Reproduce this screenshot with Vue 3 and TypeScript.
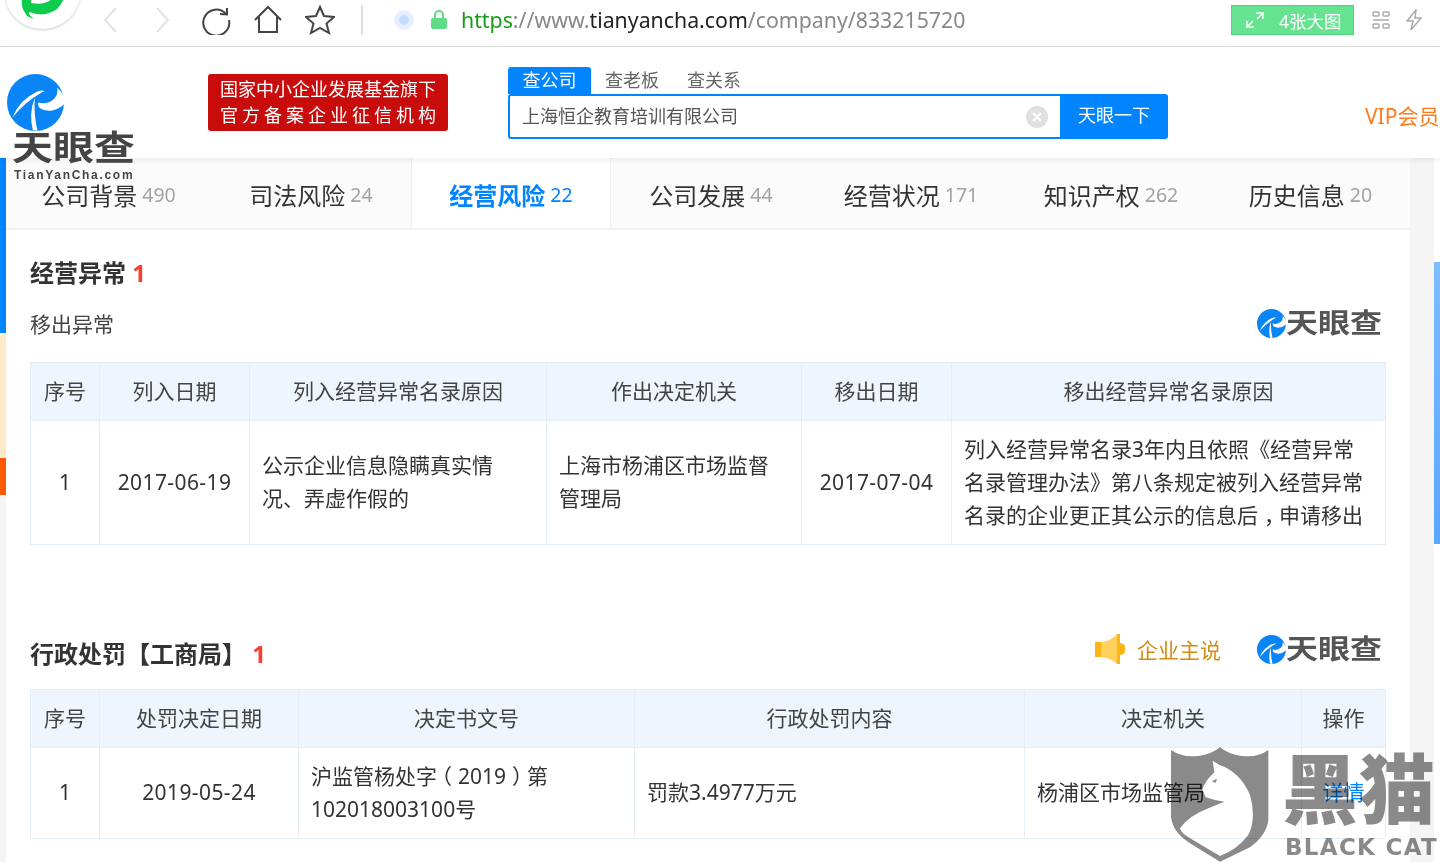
<template>
  <div class="screen">
    <div class="toolbar">
      <div class="browser-logo">
        <svg width="44" height="22" viewBox="0 0 44 22"><path d="M1 0 Q0 10 4 15 Q2 12 3 13 L6 18 L13 21 Q7 16 8 14 Q24 20 36 11 Q41 6 43 0 L32 0 Q24 8 10 5 L10 0 Z" fill="#0ecb4e" /></svg>
      </div>
      <svg class="nav-arrow first" width="14" height="28" viewBox="0 0 14 28"><path d="M13 2 L2 14 L13 26" /></svg>
      <svg class="nav-arrow second" width="14" height="28" viewBox="0 0 14 28"><path d="M1 2 L12 14 L1 26" /></svg>
      <svg class="tool reload" width="30" height="30" viewBox="0 0 30 30"><path d="M25 9 A13 13 0 1 0 28 15" /><path d="M19 9 L26 9.500 L26 3" /></svg>
      <svg class="tool home" width="30" height="30" viewBox="0 0 30 30"><path d="M2 15 L15 2 L28 15 M6 12 V27 H24 V12" /></svg>
      <svg class="tool star" width="30" height="30" viewBox="0 0 30 30"><path d="M15 2 L19 11 L29 12 L21.500 18.500 L24 28 L15 23 L6 28 L8.500 18.500 L1 12 L11 11 Z" /></svg>
      <div class="tool-sep"></div>
      <div class="shield-dot"></div>
      <svg class="lock" width="16" height="20" viewBox="0 0 16 20"><path d="M4 9 V5 A4 4 0 0 1 12 5 V9" fill="none" stroke="#5fdc85" stroke-width="2" /><rect x="0" y="8" width="16" height="11" rx="2" fill="#5fdc85" /></svg>
      <div class="url"><span class="g">https</span>://www.<span class="d">tianyancha.com</span>/company/833215720</div>
      <div class="big-pic">
        <svg width="18" height="16" viewBox="0 0 18 16"><path d="M10 1 H17 V7 M17 1 L11 7 M1 9 V15 H8 M1 15 L7 9" fill="none" stroke="#fff" stroke-width="1.500" /></svg>
        <span>4张大图</span>
      </div>
      <svg class="grid-ico" width="18" height="18" viewBox="0 0 18 18"><rect x="1" y="1" width="6" height="4" rx="1" /><rect x="11" y="1" width="6" height="4" rx="1" /><path d="M1 9 H17" /><rect x="1" y="13" width="6" height="4" rx="1" /><rect x="11" y="13" width="6" height="4" rx="1" /></svg>
      <svg class="bolt" width="16" height="22" viewBox="0 0 16 22"><path d="M10 1 L1 12 H7 L5 21 L15 9 H9 Z" /></svg>
    </div>

    <header class="site-head">
      <div class="logo">
        <svg class="logo-mark" width="57" height="57" viewBox="0 0 168 168"><use href="#tyc-mark" /></svg>
        <div class="logo-word">天眼查</div>
        <div class="logo-en">TianYanCha.com</div>
      </div>
      <div class="badge">
        <div>国家中小企业发展基金旗下</div>
        <div class="wide">官方备案企业征信机构</div>
      </div>
      <div class="search">
        <div class="search-tabs">
          <span class="on">查公司</span>
          <span>查老板</span>
          <span>查关系</span>
        </div>
        <div class="search-row">
          <div class="search-box">
            <span>上海恒企教育培训有限公司</span>
            <svg width="22" height="22" viewBox="0 0 22 22"><circle cx="11" cy="11" r="11" fill="#e0e0e0" /><path d="M7 7 L15 15 M15 7 L7 15" stroke="#fff" stroke-width="2.200" /></svg>
          </div>
          <div class="search-btn">天眼一下</div>
        </div>
      </div>
      <div class="vip">VIP会员</div>
    </header>

    <div class="page">
      <div class="left-strip">
        <div class="s-blue"></div>
        <div class="s-peach"></div>
        <div class="s-orange"></div>
      </div>
      <main class="main">
        <nav class="tabs">
          <div v-for="t in tabs" :key="t.name" class="tab" :class="{ active: t.active }">
            <span class="tab-name">{{ t.name }}</span> <span class="tab-num">{{ t.num }}</span>
          </div>
        </nav>
        <div class="content">
          <h3 class="title">经营异常 <em>1</em></h3>
          <div class="sub-row">
            <span>移出异常</span>
            <div class="mini-logo">
              <svg width="29" height="29" viewBox="0 0 168 168"><use href="#tyc-mark" /></svg>
              <span>天眼查</span>
            </div>
          </div>
          <table class="grid">
            <colgroup><col v-for="w in widthsA" :key="w" :style="{ width: w + 'px' }" /></colgroup>
            <thead>
              <tr><th v-for="h in headA" :key="h">{{ h }}</th></tr>
            </thead>
            <tbody>
              <tr class="row-a">
                <td class="c">1</td>
                <td class="c date">2017-06-19</td>
                <td>公示企业信息隐瞒真实情况、弄虚作假的</td>
                <td>上海市杨浦区市场监督管理局</td>
                <td class="c date">2017-07-04</td>
                <td>列入经营异常名录3年内且依照《经营异常名录管理办法》第八条规定被列入经营异常名录的企业更正其公示的信息后<span class="to-r">，</span>申请移出</td>
              </tr>
            </tbody>
          </table>

          <div class="title-row">
            <h3 class="title">行政处罚【工商局】 <em>1</em></h3>
            <div class="title-side">
              <svg width="30" height="32" viewBox="0 0 30 32"><rect x="0" y="9" width="6" height="15" fill="#ffb415" /><path d="M6 9 Q16 8 22 1 V31 Q16 25 6 24 Z" fill="#ffd15c" /><path d="M22 1 H25 V31 H22 Z" fill="#ffb415" /><path d="M25 10 A6 6 0 0 1 25 22 Z" fill="#ffb415" /></svg>
              <span class="say">企业主说</span>
              <div class="mini-logo">
                <svg width="29" height="29" viewBox="0 0 168 168"><use href="#tyc-mark" /></svg>
                <span>天眼查</span>
              </div>
            </div>
          </div>
          <table class="grid">
            <colgroup><col v-for="w in widthsB" :key="w" :style="{ width: w + 'px' }" /></colgroup>
            <thead>
              <tr><th v-for="h in headB" :key="h">{{ h }}</th></tr>
            </thead>
            <tbody>
              <tr class="row-b">
                <td class="c">1</td>
                <td class="c date">2019-05-24</td>
                <td>沪监管杨处字<span class="to-l">（</span>2019<span class="to-r">）</span>第102018003100号</td>
                <td>罚款3.4977万元</td>
                <td>杨浦区市场监管局</td>
                <td class="c"><a class="link">详情</a></td>
              </tr>
            </tbody>
          </table>
        </div>
      </main>
      <div class="gutter"></div>
      <div class="scroll"><div class="thumb"></div></div>
    </div>

    <div class="watermark">
      <svg class="wm-shield" width="115" height="122" viewBox="0 0 345 366">
        <path d="M18 30 Q55 55 105 47 Q140 42 165 22 Q190 42 225 47 Q275 55 310 30 V240 Q305 285 255 322 L165 365 L75 310 Q22 275 18 230 Z" fill="#8b8a8a" />
        <path d="M143 62 L162 74 Q225 95 255 165 Q275 235 250 285 Q215 330 165 348 L80 298 Q48 280 45 265 Q70 228 130 205 L178 185 Q150 182 122 172 L112 150 Q118 125 148 97 Z" fill="#fff" />
        <path d="M140 124 L156 116 L152 128 Z" fill="#8b8a8a" />
      </svg>
      <div class="wm-text">
        <div class="wm-cn">黑猫</div>
        <div class="wm-en">BLACK CAT</div>
      </div>
    </div>

    <svg class="defs" width="0" height="0">
      <symbol id="tyc-mark" viewBox="0 0 168 168">
        <circle cx="84" cy="84" r="84" fill="#0a85f5" />
        <path d="M16 128 Q36 76 88 52 Q100 47 112 50 Q100 54 94 60 Q55 82 16 128 Z" fill="#fff" />
        <path d="M76 166 Q64 115 82 70 Q78 120 90 167 Z" fill="#fff" />
        <path d="M92 84 Q118 92 140 72 Q152 58 148 40 Q162 52 170 72 L170 88 Q130 122 96 100 Q90 92 92 84 Z" fill="#fff" />
      </symbol>
    </svg>
  </div>
</template>

<script setup lang="ts">
const tabs = [
  { name: '公司背景', num: 490 },
  { name: '司法风险', num: 24 },
  { name: '经营风险', num: 22, active: true },
  { name: '公司发展', num: 44 },
  { name: '经营状况', num: 171 },
  { name: '知识产权', num: 262 },
  { name: '历史信息', num: 20 }
]

const widthsA = [69, 150, 297, 255, 150, 434]
const headA = ['序号', '列入日期', '列入经营异常名录原因', '作出决定机关', '移出日期', '移出经营异常名录原因']

const widthsB = [69, 199, 336, 390, 277, 84]
const headB = ['序号', '处罚决定日期', '决定书文号', '行政处罚内容', '决定机关', '操作']
</script>

<style>
html, body { margin: 0; height: 100%; overflow: hidden; background: #fff; }
</style>

<style scoped>
.screen { position: relative; width: 1440px; height: 862px; overflow: hidden; font-family: "Noto Sans", "Noto Sans CJK SC", sans-serif; color: #333; }
.defs { position: absolute; }

.toolbar { position: relative; display: flex; align-items: center; height: 47px; box-sizing: border-box; padding-bottom: 6px; border-bottom: 1px solid #d9d9d9; background: #fff; }
.browser-logo { position: absolute; left: 5px; top: -45px; width: 75px; height: 74px; border-radius: 50%; box-shadow: 0 1px 3px #ccc; display: flex; align-items: flex-end; justify-content: center; }
.browser-logo svg { margin-bottom: 9px; }
.nav-arrow { fill: none; stroke: #e3e3e3; stroke-width: 2; }
.nav-arrow.first { margin-left: 103px; }
.nav-arrow.second { margin-left: 39px; }
.tool { fill: none; stroke: #444; stroke-width: 2; }
.reload { margin-left: 31px; }
.home { margin-left: 22px; }
.star { margin-left: 22px; }
.tool-sep { width: 2px; height: 30px; background: #ddd; margin-left: 26px; }
.shield-dot { width: 10px; height: 10px; border-radius: 50%; background: #c6dcff; border: 5px solid #e6efff; margin-left: 31px; }
.lock { margin-left: 17px; }
.url { margin: 0 0 2px 14px; font-size: 21.300px; color: #888; width: 770px; white-space: nowrap; }
.url .g { color: #1a9a1a; }
.url .d { color: #222; }
.big-pic { display: flex; align-items: center; gap: 15px; width: 123px; height: 30px; box-sizing: border-box; padding-left: 14px; background: #66e391; border: 1px solid #55d27f; color: #fff; font-size: 17.500px; white-space: nowrap; }
.grid-ico { margin-left: 18px; fill: none; stroke: #aaa; stroke-width: 1.500; }
.bolt { margin-left: 16px; fill: none; stroke: #aaa; stroke-width: 1.500; }

.site-head { position: relative; z-index: 2; display: flex; align-items: flex-start; height: 111px; background: #fff; box-shadow: 0 2px 6px rgba(0, 0, 0, 0.07); }
.logo { position: absolute; left: 7px; top: 27px; width: 130px; z-index: 3; }
.logo-mark { display: block; }
.logo-word { margin: -4px 0 0 5px; height: 40px; font-size: 41px; line-height: 40px; font-weight: 700; color: #444; white-space: nowrap; transform: scaleY(0.84); }
.logo-en { margin: 1px 0 0 7px; font-size: 12px; line-height: 14px; font-weight: 700; letter-spacing: 1.700px; color: #444; white-space: nowrap; font-family: "Liberation Sans", sans-serif; }
.badge { margin: 27px 0 0 208px; width: 240px; height: 57px; box-sizing: border-box; padding: 2px 12px; border-radius: 3px; background: #c80c0c; color: #fff; font-size: 18px; line-height: 26px; white-space: nowrap; }
.badge .wide { letter-spacing: 4px; }
.search { margin: 20px 0 0 60px; width: 660px; }
.search-tabs { display: flex; height: 27px; font-size: 18px; line-height: 26px; color: #666; }
.search-tabs span { margin-right: 28px; }
.search-tabs .on { width: 83px; margin-right: 14px; text-align: center; background: #0084ff; color: #fff; border-radius: 3px 3px 0 0; }
.search-row { display: flex; height: 45px; }
.search-box { display: flex; align-items: center; justify-content: space-between; width: 552px; box-sizing: border-box; padding: 0 12px; border: 2px solid #0084ff; border-right: 0; border-radius: 3px 0 0 3px; font-size: 18px; color: #555; }
.search-box span { padding-bottom: 3px; }
.search-btn { width: 108px; line-height: 43px; text-align: center; background: #0084ff; color: #fff; font-size: 18px; border-radius: 0 3px 3px 0; }
.vip { margin: 55px 0 0 197px; font-size: 21px; line-height: 28px; color: #ff7a1a; white-space: nowrap; }

.page { display: flex; height: 704px; }
.left-strip { width: 6px; background: #f5f5f5; }
.s-blue { height: 175px; background: #0084ff; }
.s-peach { height: 125px; background: #ffe9c9; border-radius: 5px 0 0 0; }
.s-orange { height: 37px; background: #ff5a00; }
.main { width: 1404px; background: #fff; }
.tabs { display: grid; grid-template-columns: 205px repeat(5, 200px) 199px; height: 72px; }
.tab { box-sizing: border-box; display: flex; align-items: center; justify-content: center; padding-top: 2px; background: #fbfbfb; border-bottom: 2px solid #f3f3f3; white-space: nowrap; }
.tab.active { background: #fff; border-left: 1px solid #f0f0f0; border-right: 1px solid #f0f0f0; color: #0084ff; }
.tab-name { font-size: 24px; color: #333; }
.tab-num { margin-left: 5px; font-size: 19.500px; color: #a3a3a3; }
.tab.active .tab-name { font-weight: 700; color: #0084ff; }
.tab.active .tab-num { color: #0084ff; }

.content { padding: 26px 24px 0; }
.title { margin: 0; font-size: 24px; line-height: 34px; font-weight: 700; color: #333; white-space: nowrap; }
.title em { font-style: normal; color: #ff3b30; }
.sub-row { display: flex; align-items: center; justify-content: space-between; height: 34px; margin: 16px 0 22px; font-size: 21px; color: #444; }
.mini-logo { display: flex; align-items: center; width: 124px; margin-right: 5px; font-size: 32px; line-height: 34px; font-weight: 700; color: #555; }
.mini-logo svg { flex: none; }
.mini-logo span { white-space: nowrap; transform: scaleY(0.84); }
.grid { width: 1355px; table-layout: fixed; border-collapse: collapse; font-size: 21px; line-height: 33px; color: #333; }
.grid th, .grid td { border: 1px solid #e4eef6; padding: 0 12px; }
.grid th { height: 57px; background: #eef5fc; font-weight: 400; color: #444; white-space: nowrap; }
.row-a td { height: 122px; padding-bottom: 1px; }
.row-b td { height: 89px; padding-bottom: 1px; }
.grid .c { text-align: center; }
.grid .date { letter-spacing: 0.400px; }
.to-r, .to-l { display: inline-block; }
.to-r { transform: translateX(6px); }
.to-l { transform: translateX(-6px); }
.link { color: #0084ff; }

.title-row { display: flex; align-items: center; justify-content: space-between; height: 40px; margin: 85px 0 19px; }
.title-row .title { padding-top: 8px; }
.title-side { display: flex; align-items: center; margin-bottom: 2px; }
.say { margin: 0 36px 0 12px; font-size: 21px; color: #d28c10; white-space: nowrap; }

.gutter { width: 24px; background: #f5f5f5; }
.scroll { width: 6px; background: #fff; }
.thumb { height: 282px; margin-top: 104px; background: linear-gradient(#7dbdff, #5aa6ff); }

.watermark { position: absolute; left: 1165px; top: 740px; width: 275px; height: 122px; mix-blend-mode: multiply; display: flex; }
.wm-shield { flex: none; }
.wm-text { margin-left: 2px; color: #8b8a8a; white-space: nowrap; }
.wm-cn { font-size: 76px; line-height: 90px; font-weight: 900; letter-spacing: 1px; font-family: "Noto Sans CJK SC", sans-serif; }
.wm-en { margin: 4px 0 0 3px; font-size: 23px; line-height: 26px; font-weight: 700; letter-spacing: 1.300px; font-family: "DejaVu Sans", sans-serif; }
</style>
